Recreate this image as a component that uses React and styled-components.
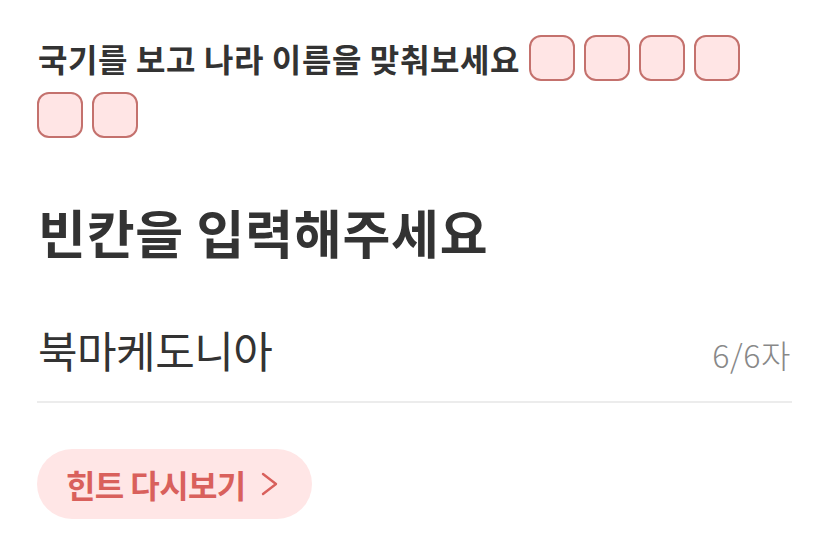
import React from "react";
import styled, { createGlobalStyle } from "styled-components";

const GlobalStyle = createGlobalStyle`
  html, body {
    margin: 0;
    padding: 0;
    background: #ffffff;
  }
  body {
    font-family: "Noto Sans CJK KR", "Noto Sans", sans-serif;
    color: #333333;
  }
`;

const Page = styled.div`
  width: 830px;
  box-sizing: border-box;
  padding: 35px 38px 0 37px;
  display: flex;
  flex-direction: column;
`;

const Question = styled.div`
  display: flex;
  flex-wrap: wrap;
  align-items: center;
  gap: 11px 9px;
`;

const QuestionText = styled.span`
  font-size: 32px;
  font-weight: 700;
  line-height: 46px;
  color: #333333;
  letter-spacing: 0.6px;
  padding-left: 1px;
`;

const Slot = styled.div`
  width: 46px;
  height: 46px;
  box-sizing: border-box;
  border: 2px solid #c4716d;
  border-radius: 12px;
  background: #ffe5e5;
`;

const Heading = styled.h1`
  margin: 64px 0 0 1px;
  font-size: 52px;
  font-weight: 700;
  line-height: 60px;
  color: #333333;
  letter-spacing: 0.8px;
`;

const InputRow = styled.div`
  margin-top: 62px;
  display: flex;
  align-items: baseline;
  justify-content: space-between;
  padding: 0 1px 24px 1px;
  border-bottom: 2px solid #ececec;
`;

const Answer = styled.span`
  font-size: 43px;
  font-weight: 400;
  line-height: 50px;
  color: #333333;
  letter-spacing: -0.5px;
`;

const Counter = styled.span`
  font-size: 32px;
  font-weight: 300;
  color: #888888;
  letter-spacing: 0.6px;
`;

const HintButton = styled.button`
  margin-top: 46px;
  align-self: flex-start;
  height: 70px;
  padding: 0 33px 0 29px;
  border: none;
  border-radius: 35px;
  background: #ffe6e6;
  color: #d9605c;
  font-family: "Noto Sans CJK KR", "Noto Sans", sans-serif;
  font-size: 32px;
  font-weight: 700;
  letter-spacing: -0.6px;
  display: flex;
  align-items: center;
  gap: 15px;
`;

const Chevron = () => (
  <svg width="18" height="26" viewBox="0 0 18 26" fill="none">
    <path d="M2 3 L15 13 L2 23" stroke="#d9605c" strokeWidth="2.4" strokeLinecap="round" strokeLinejoin="round" />
  </svg>
);

export default function App() {
  return (
    <>
      <GlobalStyle />
      <Page>
        <Question>
          <QuestionText>국기를 보고 나라 이름을 맞춰보세요</QuestionText>
          {Array.from({ length: 6 }).map((_, i) => (
            <Slot key={i} />
          ))}
        </Question>
        <Heading>빈칸을 입력해주세요</Heading>
        <InputRow>
          <Answer>북마케도니아</Answer>
          <Counter>6/6자</Counter>
        </InputRow>
        <HintButton>
          힌트 다시보기
          <Chevron />
        </HintButton>
      </Page>
    </>
  );
}
